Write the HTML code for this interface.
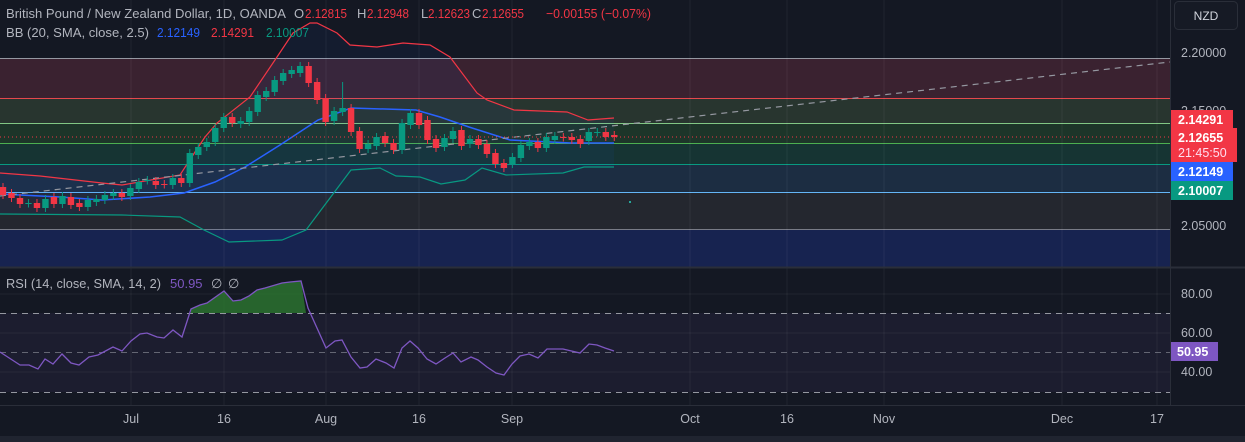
<!DOCTYPE html>
<html><head><meta charset="utf-8"><style>
body{margin:0;background:#141823;width:1245px;height:442px;overflow:hidden;font-family:"Liberation Sans",sans-serif}
svg{display:block}
text{font-family:"Liberation Sans",sans-serif}
</style></head><body>
<svg id="s" width="1245" height="442" viewBox="0 0 1245 442">
<rect width="1245" height="442" fill="#141823"/>
<rect x="0" y="58" width="1170" height="40" fill="#3a2230"/>
<rect x="0" y="98" width="1170" height="25" fill="#28352f"/>
<rect x="0" y="123" width="1170" height="20" fill="#1d3529"/>
<rect x="0" y="143" width="1170" height="21" fill="#163433"/>
<rect x="0" y="164" width="1170" height="28" fill="#1c2d42"/>
<rect x="0" y="192" width="1170" height="37" fill="#24272f"/>
<rect x="0" y="229" width="1170" height="38" fill="#172350"/>
<g stroke-width="1">
<line x1="0" y1="58.5" x2="1170" y2="58.5" stroke="#9598a1"/>
<line x1="0" y1="98.5" x2="1170" y2="98.5" stroke="#e5484d"/>
<line x1="0" y1="123.5" x2="1170" y2="123.5" stroke="#81c784"/>
<line x1="0" y1="143.5" x2="1170" y2="143.5" stroke="#4caf50"/>
<line x1="0" y1="164.5" x2="1170" y2="164.5" stroke="#089981"/>
<line x1="0" y1="192.5" x2="1170" y2="192.5" stroke="#64b5f6"/>
<line x1="0" y1="229.5" x2="1170" y2="229.5" stroke="#787b86"/>
</g>
<g stroke="#ffffff" stroke-opacity="0.06">
<line x1="131" y1="0" x2="131" y2="405"/><line x1="224" y1="0" x2="224" y2="405"/>
<line x1="326" y1="0" x2="326" y2="405"/><line x1="419" y1="0" x2="419" y2="405"/>
<line x1="512" y1="0" x2="512" y2="405"/><line x1="690" y1="0" x2="690" y2="405"/>
<line x1="787" y1="0" x2="787" y2="405"/><line x1="884" y1="0" x2="884" y2="405"/>
<line x1="1062" y1="0" x2="1062" y2="405"/><line x1="1157" y1="0" x2="1157" y2="405"/>
<line x1="0" y1="294" x2="1170" y2="294"/><line x1="0" y1="333" x2="1170" y2="333"/><line x1="0" y1="372" x2="1170" y2="372"/>
</g>
<path d="M0,173 L40,176 L102,183 L122,185 L180,175 L195,152 L205,137 L217,123 L250,97 L277,57 L293,33 L310,23 L317,23 L337,33 L350,45 L377,47 L403,43 L430,45 L450,57 L477,93 L487,100 L514,110 L567,112 L588,120 L614,118 L614,167 L584,167 L563,173 L506,175 L482,168 L465,180 L441,184 L420,177 L396,176 L380,168 L351,170 L306,230 L282,240 L229,242 L204,230 L180,217 L122,215 L0,214 Z" fill="#2962ff" fill-opacity="0.06"/>
<polyline fill="none" stroke="#f23645" stroke-width="1.2" points="0,173 40,176 102,183 122,185 180,175 195,152 205,137 217,123 250,97 277,57 293,33 310,23 317,23 337,33 350,45 377,47 403,43 430,45 450,57 477,93 487,100 514,110 567,112 588,120 614,118"/>
<polyline fill="none" stroke="#2962ff" stroke-width="1.5" points="0,194 60,197 102,200 150,197 184,193 215,182 245,167 280,145 318,120 351,108 416,110 440,117 469,127 510,140 571,143 614,143"/>
<polyline fill="none" stroke="#089981" stroke-width="1.2" points="0,214 122,215 180,217 204,230 229,242 282,240 306,230 351,170 380,168 396,176 420,177 441,184 465,180 482,168 506,175 563,173 584,167 614,167"/>
<line x1="0" y1="196" x2="1170" y2="62" stroke="#9598a1" stroke-width="1.2" stroke-dasharray="6,5"/>
<line x1="0" y1="137" x2="1170" y2="137" stroke="#f23645" stroke-width="1" stroke-dasharray="1,3"/>
<rect x="629" y="201" width="2" height="2" fill="#26a69a"/>
<g id="candles"></g>
<line x1="0" y1="267.5" x2="1245" y2="267.5" stroke="#2a2e39" stroke-width="2"/>
<rect x="0" y="313" width="1170" height="79" fill="#7e57c2" fill-opacity="0.08"/>
<g stroke="#9598a1" stroke-dasharray="6,5" stroke-width="1">
<line x1="0" y1="313.5" x2="1170" y2="313.5"/><line x1="0" y1="352.5" x2="1170" y2="352.5" stroke-opacity="0.6"/><line x1="0" y1="392.5" x2="1170" y2="392.5"/>
</g>
<path d="M191,313 L191,309 200,305 207,303 224,291 233,301 241,300 249,296 257,290 265,288 282,283 290,282 301,281 306,313 Z" fill="#2e7d32" fill-opacity="0.75"/>
<polyline fill="none" stroke="#7e57c2" stroke-width="1.3" points="0,352 20,365 29,365 38,369 45,359 53,364 62,354 71,363 79,365 89,357 98,355 113,347 122,351 131,341 140,334 147,333 157,337 164,338 173,330 182,337 191,309 200,305 207,303 224,291 233,301 241,300 249,296 257,290 265,288 282,283 290,282 301,281 308,308 326,348 335,341 342,340 351,357 360,368 367,367 376,359 386,363 394,368 402,348 410,341 418,348 427,359 436,364 445,358 453,353 461,362 471,357 478,360 487,367 496,373 504,375 512,364 520,356 529,354 538,358 547,349 563,349 580,353 589,344 597,345 605,348 614,351"/>
<line x1="1170.5" y1="0" x2="1170.5" y2="405" stroke="#2a2e39"/>
<line x1="0" y1="405.5" x2="1245" y2="405.5" stroke="#2a2e39"/>
<rect x="0" y="436" width="1245" height="6" fill="#202430"/>
<g fill="#b2b5be" font-size="12.5">
<text x="1181" y="57">2.20000</text>
<text x="1181" y="115">2.15000</text>
<text x="1181" y="230">2.05000</text>
<text x="1181" y="298">80.00</text>
<text x="1181" y="337">60.00</text>
<text x="1181" y="376">40.00</text>
<g text-anchor="middle"><text x="131" y="423">Jul</text><text x="224" y="423">16</text><text x="326" y="423">Aug</text><text x="419" y="423">16</text><text x="512" y="423">Sep</text><text x="690" y="423">Oct</text><text x="787" y="423">16</text><text x="884" y="423">Nov</text><text x="1062" y="423">Dec</text><text x="1157" y="423">17</text></g>
</g>
<rect x="1174.5" y="1.5" width="63" height="28" rx="4" fill="#161a25" stroke="#2a2e39"/>
<text x="1206" y="20" fill="#d1d4dc" font-size="12" text-anchor="middle">NZD</text>
<g font-size="12.5" font-weight="bold" fill="#fff">
<rect x="1171" y="110" width="62" height="18" fill="#f23645"/><text x="1178" y="124">2.14291</text>
<rect x="1171" y="128" width="66" height="34" fill="#f23645"/><text x="1178" y="142">2.12655</text>
<text x="1178" y="157" font-weight="normal" fill="#fde">21:45:50</text>
<rect x="1171" y="162" width="62" height="19" fill="#2962ff"/><text x="1178" y="176">2.12149</text>
<rect x="1171" y="181" width="62" height="19" fill="#089981"/><text x="1178" y="195">2.10007</text>
<rect x="1171" y="342" width="47" height="19" fill="#7e57c2"/><text x="1177" y="356">50.95</text>
</g>
<g font-size="13" fill="#b2b5be">
<text x="6" y="18" textLength="280" lengthAdjust="spacingAndGlyphs">British Pound / New Zealand Dollar, 1D, OANDA</text>
<text x="294" y="18">O</text><text x="305" y="18" fill="#f23645" textLength="42" lengthAdjust="spacingAndGlyphs">2.12815</text>
<text x="357" y="18">H</text><text x="367" y="18" fill="#f23645" textLength="42" lengthAdjust="spacingAndGlyphs">2.12948</text>
<text x="421" y="18">L</text><text x="428" y="18" fill="#f23645" textLength="42" lengthAdjust="spacingAndGlyphs">2.12623</text>
<text x="472" y="18">C</text><text x="482" y="18" fill="#f23645" textLength="42" lengthAdjust="spacingAndGlyphs">2.12655</text>
<text x="546" y="18" fill="#f23645" textLength="105" lengthAdjust="spacingAndGlyphs">−0.00155 (−0.07%)</text>
<text x="6" y="37" textLength="143" lengthAdjust="spacingAndGlyphs">BB (20, SMA, close, 2.5)</text>
<text x="157" y="37" fill="#2962ff" textLength="43" lengthAdjust="spacingAndGlyphs">2.12149</text>
<text x="211" y="37" fill="#f23645" textLength="43" lengthAdjust="spacingAndGlyphs">2.14291</text>
<text x="266" y="37" fill="#089981" textLength="43" lengthAdjust="spacingAndGlyphs">2.10007</text>
<text x="6" y="288" textLength="155" lengthAdjust="spacingAndGlyphs">RSI (14, close, SMA, 14, 2)</text>
<text x="170" y="288" fill="#7e57c2">50.95</text>
<text x="211" y="288">∅</text><text x="228" y="288">∅</text>
</g>
</svg>
<script>
var d=[[187,195,0],[193,198,0],[198,204,0],[203,203.5,1],[203,208,0],[199,208,1],[197,204,0],[196,204,1],[197,205,0],[203,207,0],[200,207,1],[199,202,1],[195,200,1],[193,196,1],[193,197,0],[188,196,1],[182,189,1],[180,180.5,1],[181,185,0],[184,184.5,0],[178,185,1],[178,183,0],[153,183,1],[147,155,1],[142,147,1],[128,142,1],[117,128,1],[117,123,0],[121,124,1],[111,122,1],[95,112,1],[91,97,1],[80,92,1],[73,81,1],[70,74,1],[66,73,1],[66,83,0],[82,100,0],[98,122,0],[111,121,1],[108,112,1,82],[108,132,0],[131,149,0],[144,149,1],[137,146,1],[136,143,0],[143,150,0],[123,150,1],[113,125,1],[113,125,0],[120,140,0],[139,148,0],[138,147,1],[131,139,1],[130,146,0],[139,144,1],[139,145,0],[144,154,0],[153,164,0],[163,168,0],[157,164,1],[145,158,1],[142,146,1],[142,148,0],[137,148,1],[136,140,1],[137,137.5,0],[137,140,0],[139,144,0],[132,141,1],[132,132.5,1],[132,137,0],[135,137,0]];
var g=document.getElementById('candles'),h='';
d.forEach(function(c,i){var x=3+i*8.49,col=c[2]?'#089981':'#f23645',hi=c[3]||c[0]-4,lo=c[1]+4;
h+='<line x1="'+x+'" x2="'+x+'" y1="'+hi+'" y2="'+lo+'" stroke="'+col+'"/>';
h+='<rect x="'+(x-3.2)+'" y="'+c[0]+'" width="6.4" height="'+Math.max(1,c[1]-c[0])+'" fill="'+col+'"/>';});
g.innerHTML=h;
</script>
</body></html>
